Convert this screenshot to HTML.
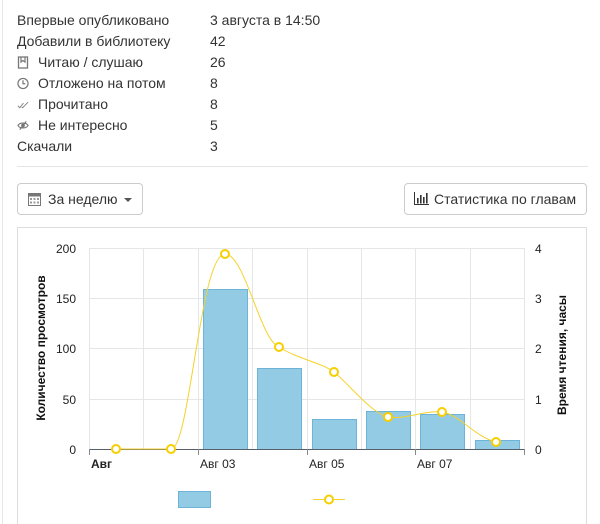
<!DOCTYPE html>
<html><head><meta charset="utf-8"><style>
html,body{margin:0;width:600px;height:524px;overflow:hidden}
body{background:#fff;font-family:"Liberation Sans",sans-serif;color:#333;position:relative}
.lb{position:absolute;left:2px;top:0;width:1px;height:524px;background:#e3e8ec}
.row{position:absolute;left:17px;height:21px;line-height:21px;font-size:14px}
.row .v{position:absolute;left:193px;white-space:nowrap}
.ic{display:inline-block;width:12px;margin-right:9px;color:#777}
.sep{position:absolute;left:17px;top:166px;width:571px;height:1px;background:#e5e5e5}
.btn{position:absolute;top:183px;height:32px;border:1px solid #ccc;border-radius:4px;box-sizing:border-box;font-size:14px;line-height:30px;color:#333;background:#fff}
.box{position:absolute;left:17px;top:227px;width:570px;height:297px;border:1px solid #ddd;border-bottom:none;box-sizing:border-box}
</style></head><body>
<div class="lb"></div>
<div class="row" style="top:10px">Впервые опубликовано<span class="v">3 августа в 14:50</span></div>
<div class="row" style="top:31px">Добавили в библиотеку<span class="v">42</span></div>
<div class="row" style="top:52px"><svg class="ic" width="12" height="13" viewBox="0 0 12 13" style="vertical-align:-2px"><rect x="1.5" y="1" width="9" height="11" fill="none" stroke="#777" stroke-width="1.3"/><path d="M4 1v5l2-1.5 2 1.5V1" fill="none" stroke="#777" stroke-width="1.2"/></svg>Читаю / слушаю<span class="v">26</span></div>
<div class="row" style="top:73px"><svg class="ic" width="13" height="13" viewBox="0 0 13 13" style="vertical-align:-2px"><circle cx="6.5" cy="6.5" r="5.5" fill="none" stroke="#777" stroke-width="1.3"/><path d="M6.5 3v3.8h2.5" fill="none" stroke="#777" stroke-width="1.3"/></svg>Отложено на потом<span class="v">8</span></div>
<div class="row" style="top:94px"><svg class="ic" width="13" height="13" viewBox="0 0 13 13" style="vertical-align:-2px"><path d="M1 8l2 2 4-5M5 9.5l1 .5 6-6" fill="none" stroke="#888" stroke-width="1.1"/></svg>Прочитано<span class="v">8</span></div>
<div class="row" style="top:115px"><svg class="ic" width="13" height="13" viewBox="0 0 13 13" style="vertical-align:-2px"><path d="M1 6.5C3 3 10 3 12 6.5 10 10 3 10 1 6.5z" fill="none" stroke="#777" stroke-width="1.2"/><circle cx="6.5" cy="6.5" r="2" fill="#777"/><path d="M3 11L10 2" stroke="#777" stroke-width="1.3"/></svg>Не интересно<span class="v">5</span></div>
<div class="row" style="top:136px">Скачали<span class="v">3</span></div>
<div class="sep"></div>
<div class="btn" style="left:17px;width:126px;padding-left:10px"><svg width="13" height="14" viewBox="0 0 13 14" style="vertical-align:-2px;margin-right:7px"><rect x="0.5" y="1.5" width="12" height="12" fill="none" stroke="#777"/><rect x="0.5" y="1.5" width="12" height="3" fill="#777"/><g fill="#999"><rect x="2" y="6" width="2" height="2"/><rect x="5.5" y="6" width="2" height="2"/><rect x="9" y="6" width="2" height="2"/><rect x="2" y="9.5" width="2" height="2"/><rect x="5.5" y="9.5" width="2" height="2"/><rect x="9" y="9.5" width="2" height="2"/></g></svg>За неделю <span style="display:inline-block;border-left:4px solid transparent;border-right:4px solid transparent;border-top:4px solid #555;vertical-align:2px;margin-left:3px"></span></div>
<div class="btn" style="left:404px;width:183px;padding-left:9px"><svg width="15" height="13" viewBox="0 0 15 13" style="vertical-align:-1px;margin-right:5px"><path d="M0.5 0v12.5H15" fill="none" stroke="#333"/><g fill="#333"><rect x="3" y="6" width="1.6" height="5.5"/><rect x="6" y="3" width="1.6" height="8.5"/><rect x="9" y="5" width="1.6" height="6.5"/><rect x="12" y="1" width="1.6" height="10.5"/></g></svg>Статистика по главам</div>
<div class="box"></div>
<svg style="position:absolute;left:0;top:0" width="600" height="524" font-family="Liberation Sans, sans-serif">
<g stroke="#e6e6e6" stroke-width="1">
<line x1="89" y1="248.5" x2="524" y2="248.5"/><line x1="89" y1="298.5" x2="524" y2="298.5"/><line x1="89" y1="348.5" x2="524" y2="348.5"/><line x1="89" y1="399.5" x2="524" y2="399.5"/>
<line x1="89.5" y1="248" x2="89.5" y2="449"/><line x1="143.5" y1="248" x2="143.5" y2="449"/><line x1="198.5" y1="248" x2="198.5" y2="449"/><line x1="252.5" y1="248" x2="252.5" y2="449"/><line x1="307.5" y1="248" x2="307.5" y2="449"/><line x1="361.5" y1="248" x2="361.5" y2="449"/><line x1="415.5" y1="248" x2="415.5" y2="449"/><line x1="470.5" y1="248" x2="470.5" y2="449"/><line x1="524.5" y1="248" x2="524.5" y2="449"/>
</g>
<g fill="#93cae4" stroke="#6eb3d8" stroke-width="1">
<rect x="203.5" y="289.5" width="44" height="160"/><rect x="257.5" y="368.5" width="44" height="81"/><rect x="312.5" y="419.5" width="44" height="30"/><rect x="366.5" y="411.5" width="44" height="38"/><rect x="420.5" y="414.5" width="44" height="35"/><rect x="475.5" y="440.5" width="44" height="9"/>
</g>
<line x1="89" y1="449.5" x2="525" y2="449.5" stroke="#56606a"/>
<g stroke="#888"><line x1="89.5" y1="449" x2="89.5" y2="455"/><line x1="198.5" y1="449" x2="198.5" y2="455"/><line x1="307.5" y1="449" x2="307.5" y2="455"/><line x1="415.5" y1="449" x2="415.5" y2="455"/><line x1="524.5" y1="449" x2="524.5" y2="455"/></g>
<path d="M116 449 C140 449 160 449 171 449 C190 449 200 254 225 254 C245 254 260 340 279 347 C300 360 320 362 334 372 C350 385 370 412 388 417 C405 420 425 410 442 412 C460 415 475 437 496 442" fill="none" stroke="#f5d22a" stroke-width="1"/>
<g fill="#fff" stroke="#f7cf00" stroke-width="2">
<circle cx="116" cy="449" r="4"/><circle cx="171" cy="449" r="4"/><circle cx="225" cy="254" r="4"/><circle cx="279" cy="347" r="4"/><circle cx="334" cy="372" r="4"/><circle cx="388" cy="417" r="4"/><circle cx="442" cy="412" r="4"/><circle cx="496" cy="442" r="4"/>
</g>
<g font-size="12" fill="#222" text-anchor="end">
<text x="76" y="253">200</text><text x="76" y="303">150</text><text x="76" y="353">100</text><text x="76" y="404">50</text><text x="76" y="454">0</text>
</g>
<g font-size="12" fill="#222">
<text x="535" y="253">4</text><text x="535" y="303">3</text><text x="535" y="353">2</text><text x="535" y="404">1</text><text x="535" y="454">0</text>
<text x="91" y="468" font-weight="bold">Авг</text><text x="200" y="468">Авг 03</text><text x="309" y="468">Авг 05</text><text x="417" y="468">Авг 07</text>
</g>
<text transform="translate(45,348) rotate(-90)" text-anchor="middle" font-size="12" font-weight="bold" fill="#111">Количество просмотров</text>
<text transform="translate(566,355) rotate(-90)" text-anchor="middle" font-size="12" font-weight="bold" fill="#111">Время чтения, часы</text>
<rect x="178.5" y="491.5" width="32" height="16" fill="#93cae4" stroke="#6eb3d8"/>
<line x1="313" y1="499.5" x2="345" y2="499.5" stroke="#f5d22a"/>
<circle cx="329" cy="499.5" r="4" fill="#fff" stroke="#f7cf00" stroke-width="2"/>
</svg>
</body></html>
